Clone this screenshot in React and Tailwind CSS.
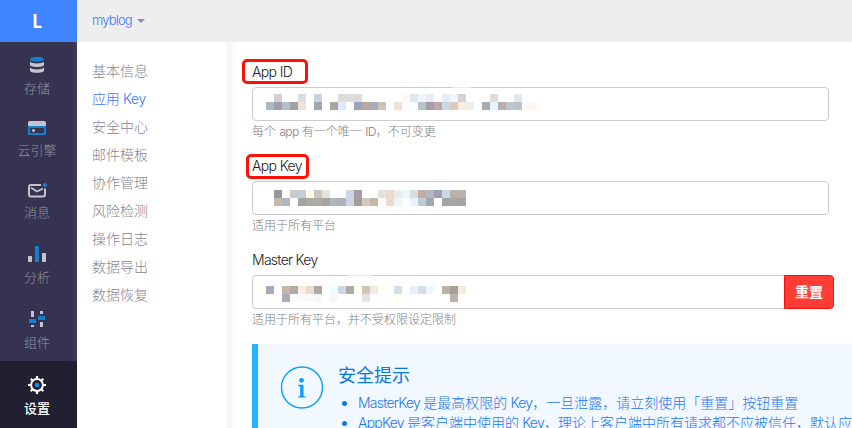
import React from "react";

const appIdCells = [
  "- d5ced3 - - d9dce5 - cbd2dc - - dddcdc dddcdc e0dbda - - - - - fdf9f5 e0e4ec f0f4fb e7ecf0 - e6edf8 f0f4fb d2d3d5 - - - e0dcda - - e3eaee - -",
  "a8b8c4 a59caa b4bfcc a3a3a5 f2e2d6 - a0a5b6 - aaa7a2 dcebfb - 9ba3b8 baa9a0 a9a9b8 cdc3b5 - f1e2d3 fafbfc - b5c5cd a89ca9 bba9aa cad8ea d9cbc0 fdebdc eeeeee - a8aab0 e6f4fc b8adab bbc6cf b5c4ca fdf8f3 fff7ed",
];
const appKeyCells = [
  "989898 - c9c9c9 c5ccdb fefaec cbc6bf e6e3db - - ccd8e9 a89ca8 - - e3e1dc eddacd e8edec e9f7fd d9dedc bfada2 b4b8c4 9b9fae ccd8e9 bbb1ac bcb3ac",
  "c6b8ab b4b5c3 - a3a3a3 aeaba6 aeaba6 a6a5a0 b1b6bb aeb3bb ccd8e9 a89a98 d3c7bc c8b6a8 - eddacd e9f7fd - e9f2fb bfcbd6 a2a4b1 - a2a3a7 a8a5a2 a3a3a3",
];
const masterCells = [
  "fffefa a7a9b8 - c6b8a9 aeaaa6 fdecdd e9ddd0 aeaaa8 - effeff ccd7e5 aeaaa6 fffdf6 d2c4b7 f2eae5 fffef4 - d4dfec - e8f1fb d3dfe8 eff7fe - bdb0a5 a3a19c f9ebdb",
  "- - fcfcfd aaacb7 f9fbff fafbfe f9fafa f6f6f6 - f8f5f8 - - - e6e2dd - - - fffff0 - - - - - - beb1ac -",
];

function Mosaic({ rows }) {
  return (
    <div className="flex flex-col">
      {rows.map((row, r) => (
        <div key={r} className="flex">
          {row.split(" ").map((c, i) => (
            <span
              key={i}
              className="block h-2 w-2"
              style={{ backgroundColor: c === "-" ? "transparent" : "#" + c }}
            />
          ))}
        </div>
      ))}
    </div>
  );
}

const StorageIcon = () => (
  <svg width="18" height="18" viewBox="0 0 18 18">
    <path d="M2 11.5v3C2 17.600 16 17.600 16 14.5v-3C14 14 4 14 2 11.5z" fill="#c4c4d0" />
    <path d="M2 5.8v3c0 3 14 3 14 0v-3c-2 2.2-12 2.2-14 0z" fill="#c4c4d0" />
    <ellipse cx="9" cy="3.2" rx="7" ry="2.4" fill="#147fcf" />
  </svg>
);
const EngineIcon = () => (
  <svg width="18" height="18" viewBox="0 0 18 18">
    <path d="M0 7V4a2 2 0 0 1 2-2h14a2 2 0 0 1 2 2v3z" fill="#c4c4d0" />
    <path d="M1 8h16v7H1z" fill="none" stroke="#147fcf" strokeWidth="2" strokeLinejoin="round" />
    <circle cx="5.500" cy="11.500" r="1.500" fill="#c4c4d0" />
  </svg>
);
const MessageIcon = () => (
  <svg width="20" height="18" viewBox="0 0 20 18">
    <path d="M14 3.900H4A2 2 0 0 0 2 6v7.500a2 2 0 0 0 2 2h12a2 2 0 0 0 2-2V7.500" fill="none" stroke="#c4c4d0" strokeWidth="2" />
    <path d="M4 6.800l6 3.700 6-3" fill="none" stroke="#c4c4d0" strokeWidth="1.900" />
    <circle cx="18" cy="4" r="2" fill="#147fcf" />
  </svg>
);
const ChartIcon = () => (
  <svg width="18" height="18" viewBox="0 0 18 18">
    <rect x="0" y="11" width="4" height="6" rx="0.800" fill="#c4c4d0" />
    <rect x="7" y="1" width="4" height="16" rx="0.600" fill="#147fcf" />
    <rect x="14" y="8" width="4" height="9" rx="0.800" fill="#c4c4d0" />
  </svg>
);
const ComponentIcon = () => (
  <svg width="18" height="18" viewBox="0 0 18 18">
    <path d="M3 1h3v6H3zM3 15h3v2H3zM12 1h3v3h-3zM12 12h3v5h-3z" fill="#c4c4d0" />
    <rect x="1" y="9" width="7" height="4" rx="0.500" fill="#147fcf" />
    <rect x="10" y="6" width="7" height="4" rx="0.500" fill="#147fcf" />
  </svg>
);
const GearIcon = () => (
  <svg width="18" height="18" viewBox="0 0 18 18">
    <circle cx="9" cy="9" r="5.900" fill="none" stroke="#fff" strokeWidth="2" />
    <path
      d="M9 0v3M9 15v3M0 9h3M15 9h3M2.700 2.700l2 2M13.300 13.300l2 2M2.700 15.300l2-2M13.300 4.700l2-2"
      stroke="#fff"
      strokeWidth="2.200"
    />
    <circle cx="9" cy="9" r="2.200" fill="#0095ff" />
  </svg>
);

const mainNav = [
  { label: "存储", Icon: StorageIcon, box: "h-[62px] pt-[14px] gap-[4px] text-[#9494a0]" },
  { label: "云引擎", Icon: EngineIcon, box: "h-[62px] pt-[15px] gap-[3px] text-[#9494a0]" },
  { label: "消息", Icon: MessageIcon, box: "h-[64px] pt-[15px] gap-[3px] text-[#9494a0]" },
  { label: "分析", Icon: ChartIcon, box: "h-[65px] pt-[15px] gap-[4px] text-[#9494a0]" },
  { label: "组件", Icon: ComponentIcon, box: "h-[66px] pt-[15px] gap-[4px] text-[#9494a0]" },
  { label: "设置", Icon: GearIcon, box: "h-[67px] pt-[15px] gap-[4px] bg-[#202030] text-white font-medium" },
];

const subNav = ["基本信息", "应用 Key", "安全中心", "邮件模板", "协作管理", "风险检测", "操作日志", "数据导出", "数据恢复"];

const help = "h-[22px] text-[12px] leading-[22px] tracking-normal text-[#808080]";

const En = ({ children }) => <span className="tracking-[-0.055em]">{children}</span>;

export default function App() {
  return (
    <div className="flex h-[428px] w-[852px] overflow-hidden bg-white font-['Inter','Noto_Sans_CJK_SC',sans-serif] text-[14px] font-light tracking-normal">
      <aside className="flex w-[77px] shrink-0 flex-col bg-[#353350]">
        <div className="flex h-[42px] shrink-0 items-center justify-center bg-[#3f85ff] pr-[3px] text-[18px] font-black text-white font-['Lato']">L</div>
        <nav className="flex flex-col shadow-[inset_-7px_0_6px_-6px_#57557099]">
          {mainNav.map(({ label, Icon, box }) => (
            <div key={label} className={"flex shrink-0 flex-col items-center pr-[3px] " + box}>
              <Icon />
              <span className="text-[13px] leading-5">{label}</span>
            </div>
          ))}
        </nav>
      </aside>

      <div className="flex min-w-0 flex-1 flex-col">
        <header className="flex h-[42px] shrink-0 items-center gap-[6px] bg-[#eeeeee] pl-[15px] text-[#4475ff]">
          <span className="w-[39px] pb-[3px] text-[13px] leading-5 tracking-[-0.065em]">myblog</span>
          <svg width="8" height="4" viewBox="0 0 8 4"><path d="M0 0h8L4 4z" fill="#8f91a7" /></svg>
        </header>

        <div className="flex min-h-0 flex-1">
          <nav className="flex w-[150px] shrink-0 flex-col pl-[15px] pt-[15px] text-[#858591]">
            {subNav.map((s) => (
              <a key={s} className={s === "应用 Key" ? "h-7 leading-7 tracking-[-0.025em] text-[#4475ff]" : "h-7 leading-7"}>{s}</a>
            ))}
          </nav>

          <main className="min-w-0 flex-1 bg-[linear-gradient(to_right,#f3f3f3,#fff_10px)] pl-[25px] pt-[17px] text-[#222]">
            <section className="h-[94px]">
              <div className="relative h-7 leading-[26px] tracking-[-0.045em]">
                App ID
                <span className="absolute -left-[10px] top-0 h-[25px] w-[66px] rounded-[5px] border-[3px] border-[#fb1206]" />
              </div>
              <div className="relative flex h-[34px] w-[577px] items-center rounded-[4px] border border-[#cccccc] bg-white pb-[4px] pl-[13px]">
                <Mosaic rows={appIdCells} />
                <span className="absolute -top-[2px] left-[200px] h-[3px] w-[18px] rounded-full bg-white/60" />
              </div>
              <p className={help}>每个 <En>app</En> 有一个唯一 <En>ID</En>，不可变更</p>
            </section>

            <section className="h-[94px]">
              <div className="relative h-7 leading-[26px] tracking-[-0.045em]">
                App Key
                <span className="absolute -left-[6px] top-[1px] h-[25px] w-[63px] rounded-[5px] border-[3px] border-[#fb1206]" />
              </div>
              <div className="flex h-[34px] w-[577px] items-center rounded-[4px] border border-[#cccccc] bg-white pl-[21px]">
                <Mosaic rows={appKeyCells} />
              </div>
              <p className={help}>适用于所有平台</p>
            </section>

            <section className="h-[97px]">
              <div className="h-7 leading-[26px] tracking-[-0.052em]">Master Key</div>
              <div className="flex">
                <div className="relative flex h-[34px] w-[532px] items-center rounded-l-[4px] border border-r-0 border-[#cccccc] bg-white pl-[5px] pt-[4px]">
                  <Mosaic rows={masterCells} />
                  <span className="absolute -top-[2px] left-[94px] h-[3px] w-[26px] rounded-full bg-white/60" />
                </div>
                <button className="h-[34px] w-[50px] rounded-r-[4px] border border-[#ff1010] bg-[#ff3d35] pb-[2px] text-[14px] font-bold text-white">重置</button>
              </div>
              <p className={help}>适用于所有平台，并不受权限设定限制</p>
            </section>

            <section className="flex h-[120px] border-l-[6px] border-[#24b6ff] bg-[#f1f8ff] text-[#1f76ef]">
              <svg className="ml-[22px] mt-[22px] shrink-0" width="44" height="44" viewBox="0 0 44 44">
                <circle cx="22" cy="21.500" r="20.500" fill="none" stroke="#0b9dff" strokeWidth="1.400" />
                <circle cx="21.500" cy="14.300" r="2.400" fill="#0b9dff" />
                <path d="M18.500 18.800h5v11.200l2 .5v1h-7.300v-1l2-.5v-9.200l-1.700-.5z" fill="#0b9dff" />
              </svg>
              <div className="ml-[14px] whitespace-nowrap pt-[20px]">
                <h2 className="h-[29px] text-[18px] font-normal leading-6 text-[#0879e8]">安全提示</h2>
                <ul className="list-none leading-5">
                  <li className="flex items-center gap-[11px] pl-[4px]">
                    <i className="block h-[5px] w-[5px] rounded-full bg-[#087be9]" />
                    <span><En>MasterKey </En>是最高权限的<En> Key</En>，一旦泄露，请立刻使用「重置」按钮重置</span>
                  </li>
                  <li className="flex items-center gap-[11px] pl-[4px]">
                    <i className="block h-[5px] w-[5px] rounded-full bg-[#087be9]" />
                    <span><En>AppKey </En>是客户端中使用的<En> Key</En>，理论上客户端中所有请求都不应被信任，默认应</span>
                  </li>
                </ul>
              </div>
            </section>
          </main>
        </div>
      </div>
    </div>
  );
}
